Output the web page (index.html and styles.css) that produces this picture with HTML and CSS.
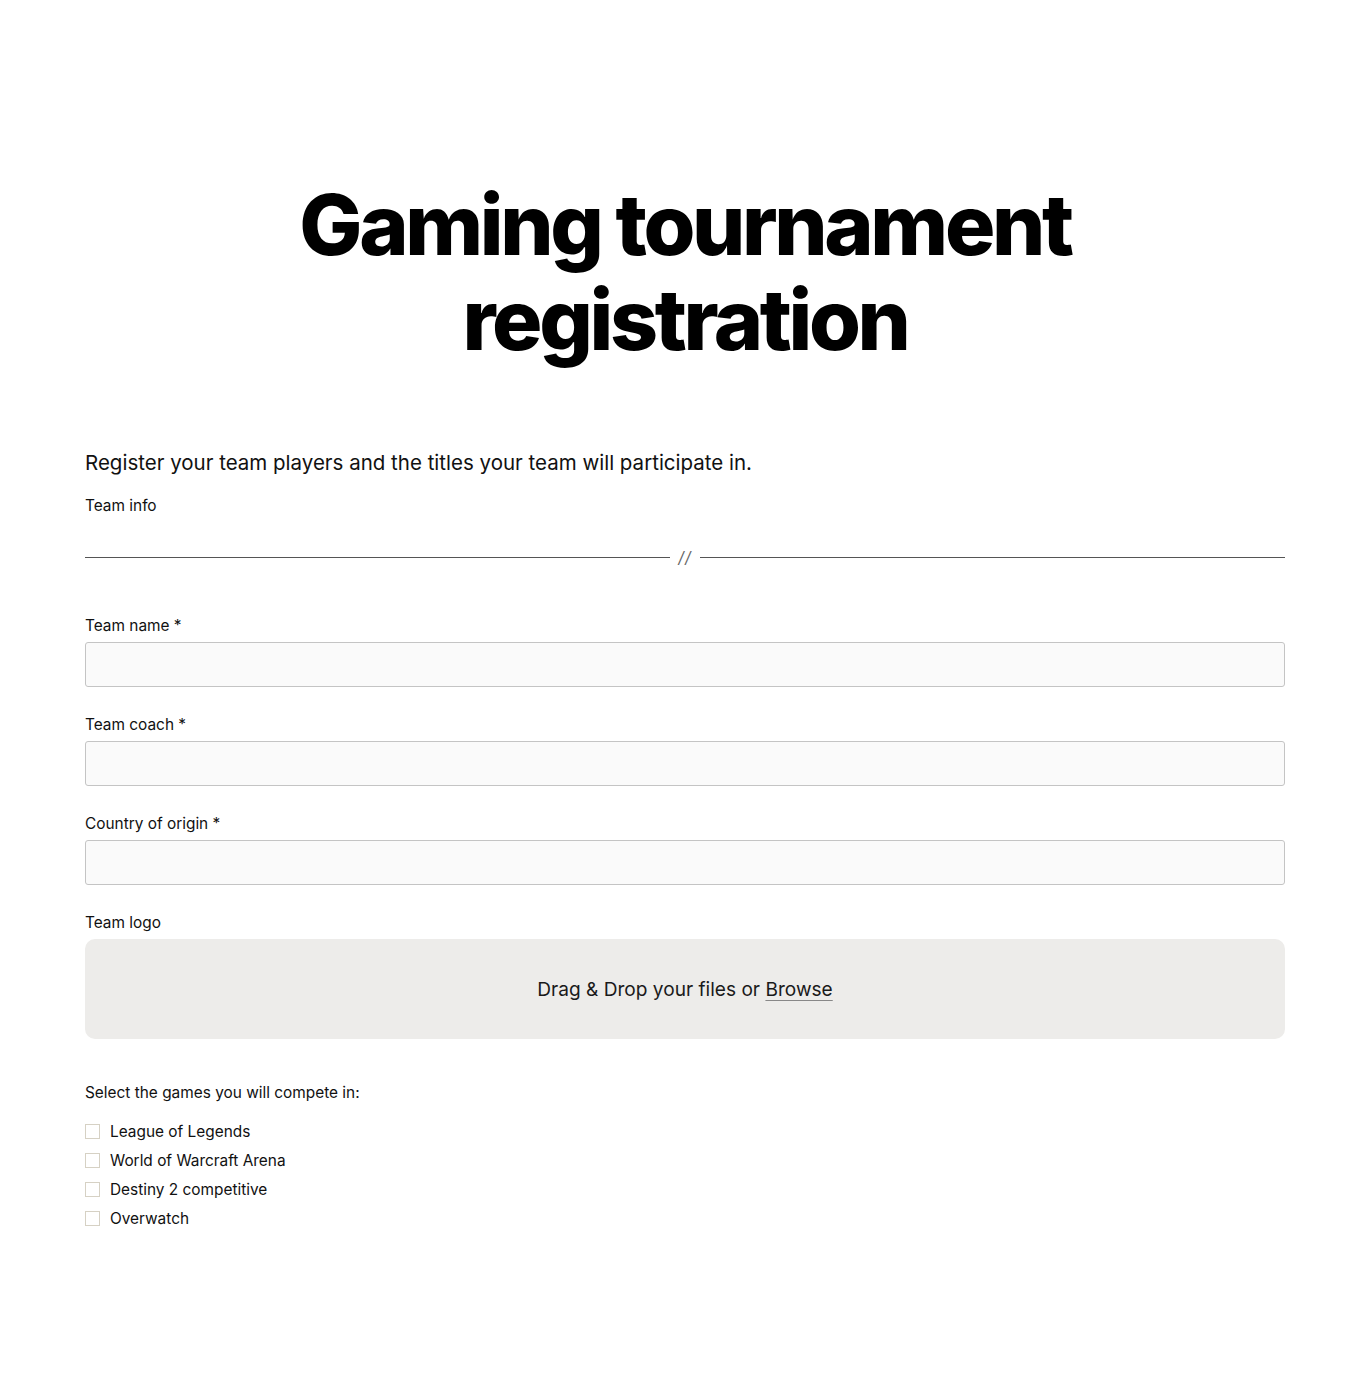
FILE: index.html
```html
<!DOCTYPE html>
<html lang="en">
<head>
<meta charset="utf-8">
<title>Gaming tournament registration</title>
<link rel="stylesheet" href="styles.css">
</head>
<body>
<main class="page">
  <h1 class="title">Gaming tournament registration</h1>
  <p class="intro">Register your team players and the titles your team will participate in.</p>
  <p class="section-label">Team info</p>
  <div class="divider"><span class="divider-line"></span><span class="divider-mark">//</span><span class="divider-line"></span></div>
  <form class="form">
    <div class="field">
      <label class="label" for="team-name">Team name *</label>
      <input class="input" id="team-name" type="text">
    </div>
    <div class="field">
      <label class="label" for="team-coach">Team coach *</label>
      <input class="input" id="team-coach" type="text">
    </div>
    <div class="field">
      <label class="label" for="country">Country of origin *</label>
      <input class="input" id="country" type="text">
    </div>
    <div class="field">
      <span class="label">Team logo</span>
      <div class="dropzone">Drag &amp; Drop your files or&nbsp;<span class="browse">Browse</span></div>
    </div>
    <fieldset class="games">
      <legend class="games-label">Select the games you will compete in:</legend>
      <label class="check"><span class="box"></span>League of Legends</label>
      <label class="check"><span class="box"></span>World of Warcraft Arena</label>
      <label class="check"><span class="box"></span>Destiny 2 competitive</label>
      <label class="check"><span class="box"></span>Overwatch</label>
    </fieldset>
  </form>
</main>
</body>
</html>
```

FILE: styles.css
```css
* { box-sizing: border-box; }
html, body { margin: 0; padding: 0; background: #ffffff; }
body {
  font-family: Inter, "Noto Sans", sans-serif;
  color: #111111;
}
.page {
  width: 1200px;
  margin: 0 auto;
  padding-top: 177px;
}
.title {
  margin: 0;
  font-size: 84px;
  line-height: 95px;
  font-weight: 800;
  letter-spacing: -0.04em;
  text-align: center;
  color: #000;
}
.intro {
  margin: 81px 0 0;
  font-size: 20.5px;
  line-height: 30px;
}
.section-label {
  margin: 16px 0 0;
  font-size: 15.4px;
  line-height: 24px;
}
.divider {
  display: flex;
  align-items: center;
  gap: 8px;
  margin-top: 29px;
  height: 20px;
}
.divider-line {
  flex: 1;
  height: 1px;
  background: #555;
}
.divider-mark {
  font-size: 16px;
  color: #666;
  font-style: italic;
  letter-spacing: 1px;
}
.form { margin-top: 47px; }
.field { margin-bottom: 26px; }
.label {
  display: block;
  font-size: 15.4px;
  line-height: 24px;
  margin-bottom: 4px;
}
.input {
  display: block;
  width: 100%;
  height: 45px;
  border: 1px solid #c4c4c4;
  border-radius: 3px;
  background: #fafafa;
  font: inherit;
}
.dropzone {
  height: 100px;
  border-radius: 10px;
  background: #edecea;
  display: flex;
  align-items: center;
  justify-content: center;
  font-size: 19.1px;
  color: #1a1a1a;
}
.browse {
  text-decoration: underline;
  text-decoration-color: #888;
  text-underline-offset: 4px;
}
.games {
  border: 0;
  margin: 42px 0 0;
  padding: 0;
}
.games-label {
  padding: 0;
  font-size: 15.4px;
  line-height: 24px;
  margin-bottom: 12px;
}
.check {
  display: flex;
  align-items: center;
  gap: 10px;
  font-size: 15.4px;
  line-height: 29px;
}
.box {
  width: 15px;
  height: 15px;
  border: 1px solid #d6d1c4;
  background: #fff;
}
```
